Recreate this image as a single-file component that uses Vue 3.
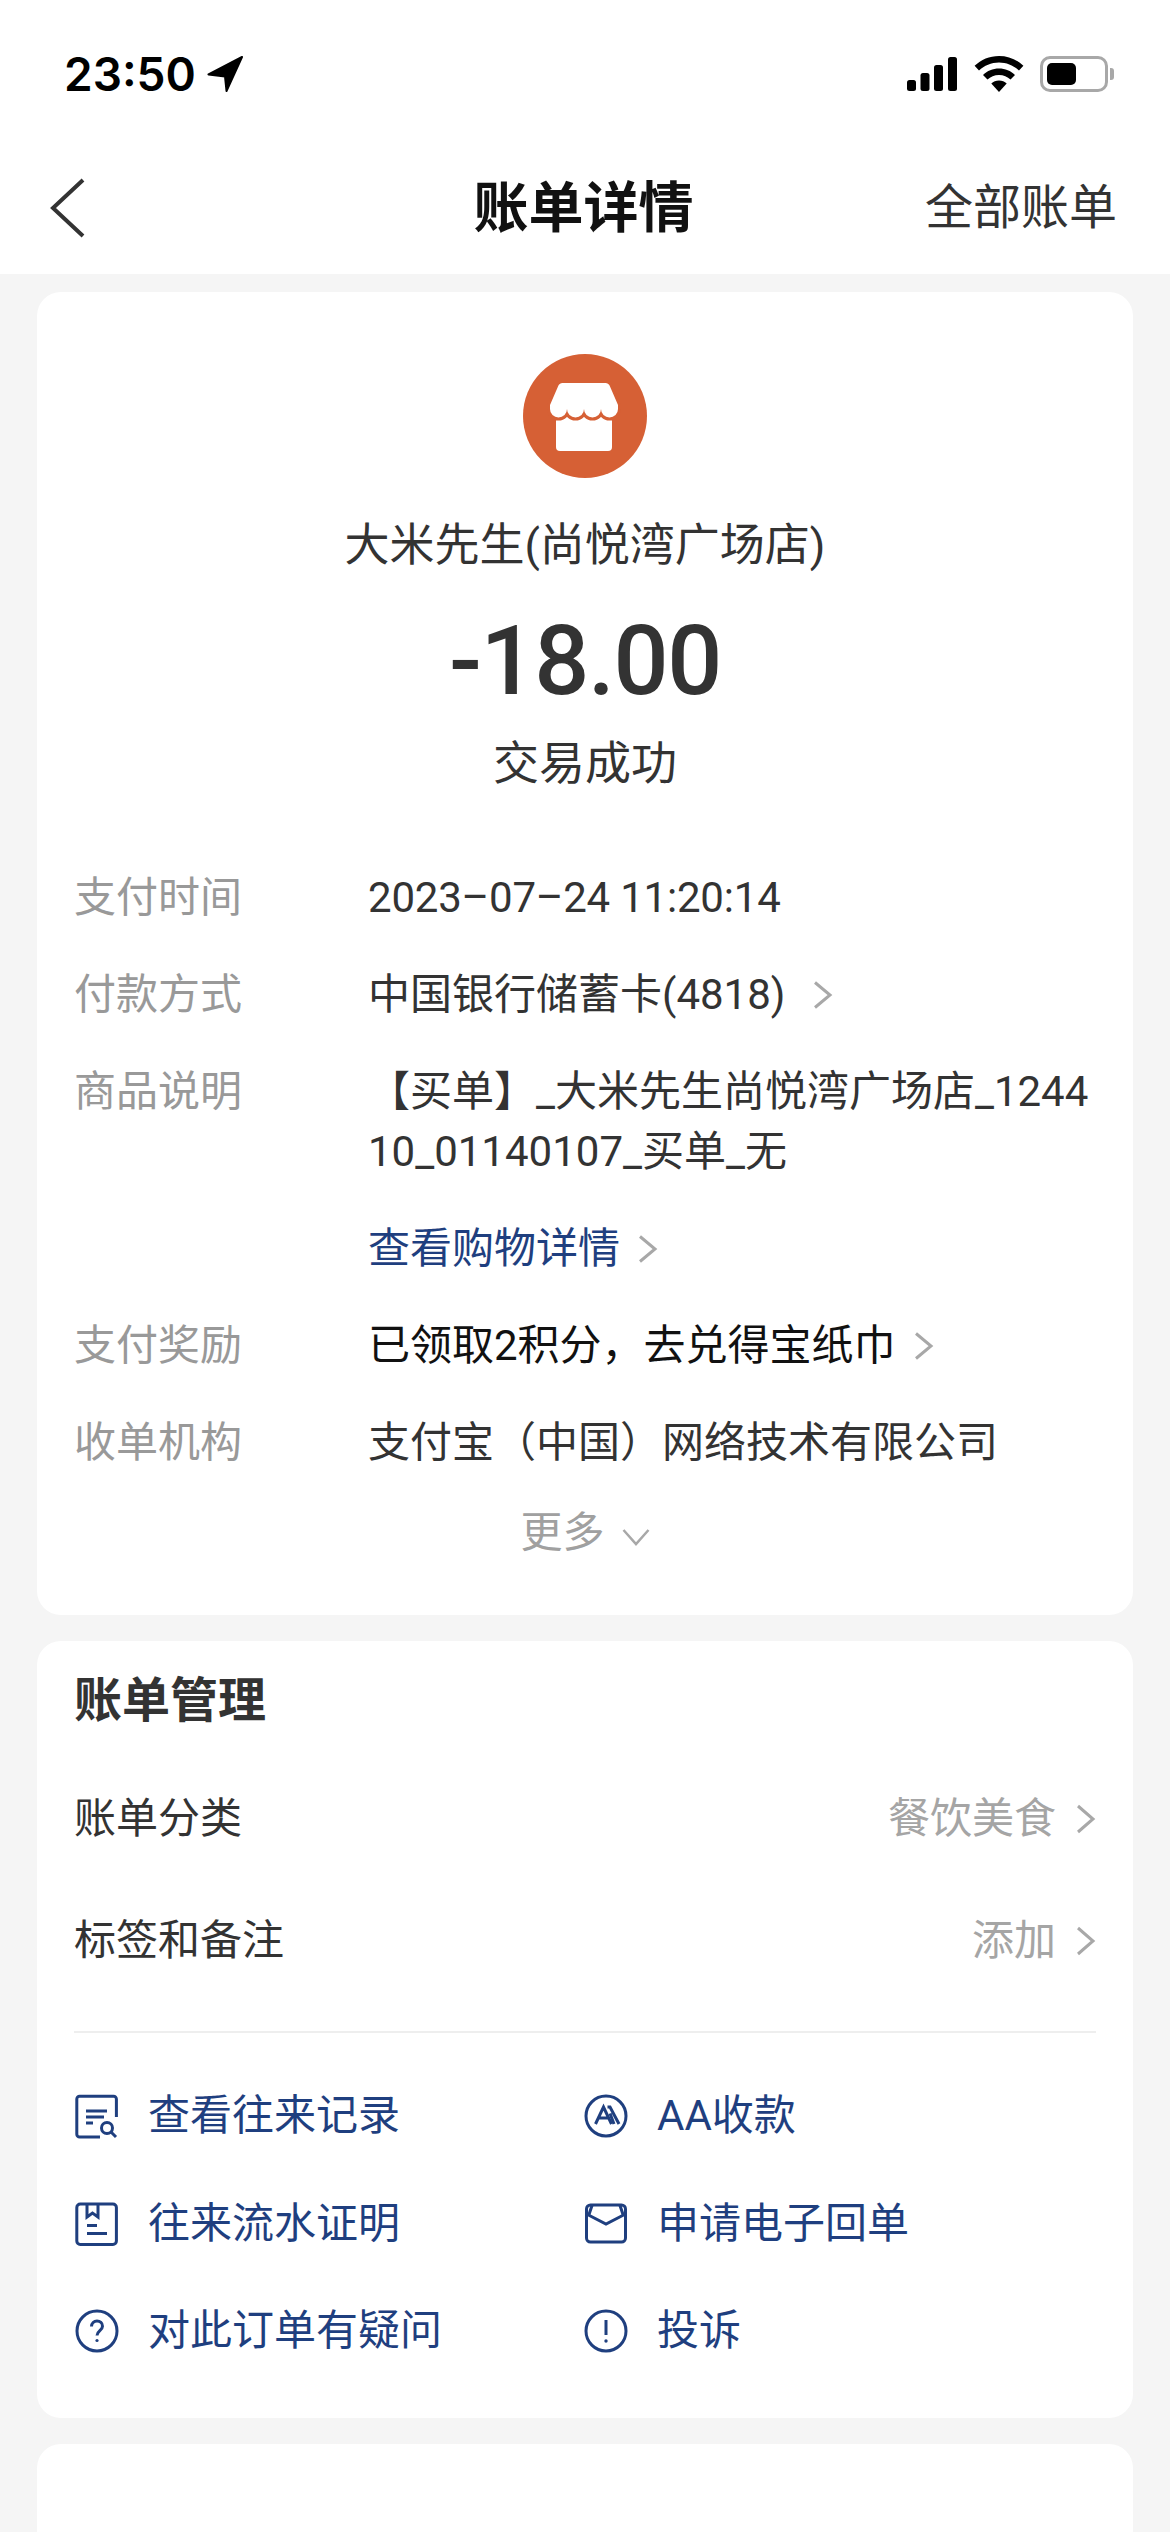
<script setup>
const details = [
  { label: "支付时间", value: "2023–07–24 11:20:14", tight: true },
  { label: "付款方式", value: "中国银行储蓄卡(4818)", arrow: true, wide: true },
  {
    label: "商品说明",
    value: "【买单】_大米先生尚悦湾广场店_124410_01140107_买单_无",
    multiline: true,
  },
  { value: "查看购物详情", arrow: true, link: true },
  { label: "支付奖励", value: "已领取2积分，去兑得宝纸巾", arrow: true, dark: true },
  { label: "收单机构", value: "支付宝（中国）网络技术有限公司" },
];

const manage = [
  { label: "账单分类", value: "餐饮美食" },
  { label: "标签和备注", value: "添加" },
];

const actions = [
  { icon: "record", text: "查看往来记录" },
  { icon: "aa", text: "AA收款" },
  { icon: "proof", text: "往来流水证明" },
  { icon: "mail", text: "申请电子回单" },
  { icon: "question", text: "对此订单有疑问" },
  { icon: "alert", text: "投诉" },
];
</script>

<template>
  <div class="page">
    <header class="top">
      <div class="status">
        <div class="clock">
          <span>23:50</span>
          <svg class="locate" width="36" height="36" viewBox="0 0 36 36">
            <path
              d="M35 1 1.500 18.500 18 20.500 19.500 35z"
              fill="#000"
              stroke="#000"
              stroke-width="2"
              stroke-linejoin="round"
            />
          </svg>
        </div>
        <div class="indicators">
          <svg width="50" height="34" viewBox="0 0 50 34">
            <rect x="0" y="23" width="9" height="11" rx="2.500" />
            <rect x="13.500" y="16" width="9" height="18" rx="2.500" />
            <rect x="27" y="8" width="9" height="26" rx="2.500" />
            <rect x="41" y="0" width="9" height="34" rx="2.500" />
          </svg>
          <svg class="wifi" width="50" height="36" viewBox="0 0 50 36">
            <path d="M25 0C15.500 0 7 3.700.6 9.800L5 14.500C10.200 9.500 17.300 6.400 25 6.400s14.800 3.100 20 8.100l4.400-4.700C43 3.700 34.500 0 25 0z" />
            <path d="M25 12.500c-6.200 0-11.800 2.400-16 6.400l4.500 4.700c3-2.800 7-4.600 11.500-4.600s8.500 1.800 11.500 4.600l4.500-4.700c-4.200-4-9.800-6.400-16-6.400z" />
            <path d="M25 24.500c-3 0-5.700 1.100-7.700 3L25 36l7.700-8.500c-2-1.900-4.700-3-7.700-3z" />
          </svg>
          <div class="battery">
            <div class="battery-fill"></div>
          </div>
          <div class="battery-nub"></div>
        </div>
      </div>
      <nav class="nav">
        <svg class="back" width="36" height="60" viewBox="0 0 36 60">
          <path d="M33 2 3 30l30 28" fill="none" stroke="#333" stroke-width="4" />
        </svg>
        <h1 class="title">账单详情</h1>
        <span class="all">全部账单</span>
      </nav>
    </header>

    <main class="content">
      <section class="card summary">
        <svg class="avatar" width="124" height="124" viewBox="0 0 124 124">
          <circle cx="62" cy="62" r="62" fill="#d66035" />
          <rect x="33" y="55" width="56" height="42" rx="4" fill="#fff" />
          <path
            d="M40 29H82a5 5 0 0 1 5 3.500L95 51v4a8.500 8.500 0 0 1-17 0 8.500 8.500 0 0 1-17 0 8.500 8.500 0 0 1-17 0 8.500 8.500 0 0 1-17 0v-4l8-18.500A5 5 0 0 1 40 29z"
            fill="#fff"
            stroke="#d66035"
            stroke-width="6"
            paint-order="stroke"
          />
        </svg>
        <p class="merchant">大米先生(尚悦湾广场店)</p>
        <p class="amount">-18.00</p>
        <p class="state">交易成功</p>

        <div class="details">
          <div v-for="row in details" :key="row.value" class="detail">
            <span class="detail-label">{{ row.label }}</span>
            <div
              class="detail-value"
              :class="{ link: row.link, dark: row.dark, multi: row.multiline, tight: row.tight, wide: row.wide }"
            >
              <span>{{ row.value }}</span>
              <svg v-if="row.arrow" class="chev" width="20" height="28" viewBox="0 0 20 28">
                <path d="M2 1.500 17 14 2 26.500" fill="none" stroke="#a8a8a8" stroke-width="3" />
              </svg>
            </div>
          </div>
        </div>

        <div class="more">
          <span>更多</span>
          <svg width="28" height="18" viewBox="0 0 28 18">
            <path d="M1.500 2 14 16 26.500 2" fill="none" stroke="#a8a8a8" stroke-width="2.500" />
          </svg>
        </div>
      </section>

      <section class="card manage">
        <h2 class="manage-title">账单管理</h2>
        <div v-for="row in manage" :key="row.label" class="manage-row">
          <span>{{ row.label }}</span>
          <div class="manage-value">
            <span>{{ row.value }}</span>
            <svg width="20" height="30" viewBox="0 0 20 30">
              <path d="M2 2 17 15 2 28" fill="none" stroke="#a8a8a8" stroke-width="3" />
            </svg>
          </div>
        </div>
        <div class="divider"></div>
        <div class="actions">
          <div v-for="item in actions" :key="item.text" class="action">
            <svg class="action-icon" width="46" height="46" viewBox="0 0 46 46" fill="none" stroke="#1f3f7f" stroke-width="3">
              <template v-if="item.icon === 'record'">
                <path d="M42.400 24V6a2.800 2.800 0 0 0-2.800-2.800H5.600A2.800 2.800 0 0 0 2.800 6v35.200A2.800 2.800 0 0 0 5.600 44H26" />
                <path d="M12 18h21M12 24h18M12 30h7" />
                <circle cx="33" cy="35" r="5.500" />
                <path d="m37 39 5 5" />
              </template>
              <template v-else-if="item.icon === 'proof'">
                <rect x="2.800" y="3" width="39.600" height="40.500" rx="3.500" />
                <path d="M13 3v13l5.500-4 5.500 4V3" />
                <path d="M13 24.500h10M13 32.500h20" />
              </template>
              <template v-else-if="item.icon === 'question'">
                <circle cx="23" cy="23" r="20" />
                <path d="M17.500 18.500c0-3.200 2.500-5.500 5.500-5.500s5.500 2.200 5.500 5.200c0 4.300-5.500 4.600-5.500 9.300" />
                <circle cx="23" cy="32.500" r="1.600" fill="#1f3f7f" stroke="none" />
              </template>
              <template v-else-if="item.icon === 'aa'">
                <circle cx="23" cy="23" r="20" />
                <path d="m12.500 31 8-17 8 17M15.500 25h10" />
                <path d="M24.500 14h2.500l9 17M27 20.500 31 31" />
              </template>
              <template v-else-if="item.icon === 'mail'">
                <rect x="3.500" y="4" width="39" height="37" rx="4" />
                <path d="m3.500 13 19.500 10 19.500-10M9 4.500 6 13.500M37 4.500l3 9" />
              </template>
              <template v-else>
                <circle cx="23" cy="23" r="20" />
                <path d="M23 12v15" />
                <circle cx="23" cy="33" r="1.700" fill="#1f3f7f" stroke="none" />
              </template>
            </svg>
            <span>{{ item.text }}</span>
          </div>
        </div>
      </section>

      <section class="card tail"></section>
    </main>
  </div>
</template>

<style>
html,
body {
  margin: 0;
  background: #f5f5f5;
}
</style>

<style scoped>
.page {
  display: flex;
  flex-direction: column;
  width: 1170px;
  height: 2532px;
  overflow: hidden;
  background: #f5f5f5;
  color: #333;
  font-family: Roboto, "Noto Sans CJK SC", sans-serif;
  font-size: 42px;
}

p,
h1,
h2 {
  margin: 0;
  font-weight: 400;
}

.top {
  height: 274px;
  background: #fff;
}

.status {
  display: flex;
  align-items: center;
  justify-content: space-between;
  height: 36px;
  padding: 56px 56px 49px 64px;
}

.clock {
  display: flex;
  align-items: center;
  gap: 11px;
  font-family: Inter, sans-serif;
  font-size: 46px;
  font-weight: 600;
  color: #000;
}

.indicators {
  display: flex;
  align-items: center;
  gap: 16px;
}

.wifi {
  margin-left: 1px;
}

.battery {
  box-sizing: border-box;
  width: 68px;
  height: 36px;
  padding: 4px;
  border: 3px solid #a8a8a8;
  border-radius: 10px;
}

.battery-fill {
  width: 29px;
  height: 100%;
  border-radius: 5px;
  background: #000;
}

.battery-nub {
  width: 4px;
  height: 12px;
  margin-left: -14px;
  border-radius: 0 3px 3px 0;
  background: #a8a8a8;
}

.nav {
  display: grid;
  grid-template-columns: 1fr auto 1fr;
  align-items: center;
  height: 133px;
  padding: 0 53px 0 50px;
}

.title {
  font-size: 55px;
  font-weight: 700;
  line-height: 60px;
  color: #111;
}

.all {
  justify-self: end;
  font-size: 48px;
  line-height: 60px;
  color: #333;
}

.content {
  display: flex;
  flex: 1;
  flex-direction: column;
  gap: 26px;
  padding: 18px 37px 0;
}

.card {
  border-radius: 24px;
  background: #fff;
}

.summary {
  display: flex;
  flex-direction: column;
  align-items: center;
  padding: 62px 37px 52px;
}

.merchant {
  margin-top: 38px;
  font-size: 45px;
  line-height: 60px;
}

.amount {
  margin-top: 35px;
  font-size: 97px;
  font-weight: 500;
  line-height: 100px;
  letter-spacing: -1.4px;
}

.state {
  margin-top: 22px;
  font-size: 46px;
  line-height: 60px;
}

.details {
  display: flex;
  flex-direction: column;
  gap: 37px;
  align-self: stretch;
  margin-top: 75px;
}

.detail {
  display: grid;
  grid-template-columns: 294px 1fr;
  line-height: 60px;
}

.detail-label {
  color: #999;
}

.detail-value {
  display: flex;
  align-items: center;
  gap: 18px;
}

.detail-value.multi {
  word-break: break-all;
}

.detail-value.tight {
  letter-spacing: -0.2px;
}

.detail-value.wide {
  gap: 28px;
}

.link {
  color: #1f3f7f;
}

.dark {
  color: #111;
}

.more {
  display: flex;
  align-items: center;
  gap: 17px;
  margin-top: 30px;
  line-height: 60px;
  color: #a0a0a0;
}

.more svg {
  margin-top: 8px;
}

.manage {
  padding: 30px 37px 64px;
}

.manage-title {
  font-size: 48px;
  font-weight: 700;
  line-height: 60px;
}

.manage-row {
  display: flex;
  align-items: center;
  justify-content: space-between;
  margin-top: 58px;
  line-height: 60px;
}

.manage-row + .manage-row {
  margin-top: 62px;
}

.manage-value {
  display: flex;
  align-items: center;
  gap: 20px;
  color: #a5a5a5;
}

.divider {
  height: 2px;
  margin-top: 60px;
  background: #eee;
}

.actions {
  display: grid;
  grid-template-columns: 509px 1fr;
  row-gap: 61.5px;
  margin-top: 60px;
}

.action {
  display: flex;
  align-items: center;
  gap: 28px;
  height: 46px;
  line-height: 46px;
  color: #1f3f7f;
}

.tail {
  flex: 1;
  border-radius: 24px 24px 0 0;
}
</style>
